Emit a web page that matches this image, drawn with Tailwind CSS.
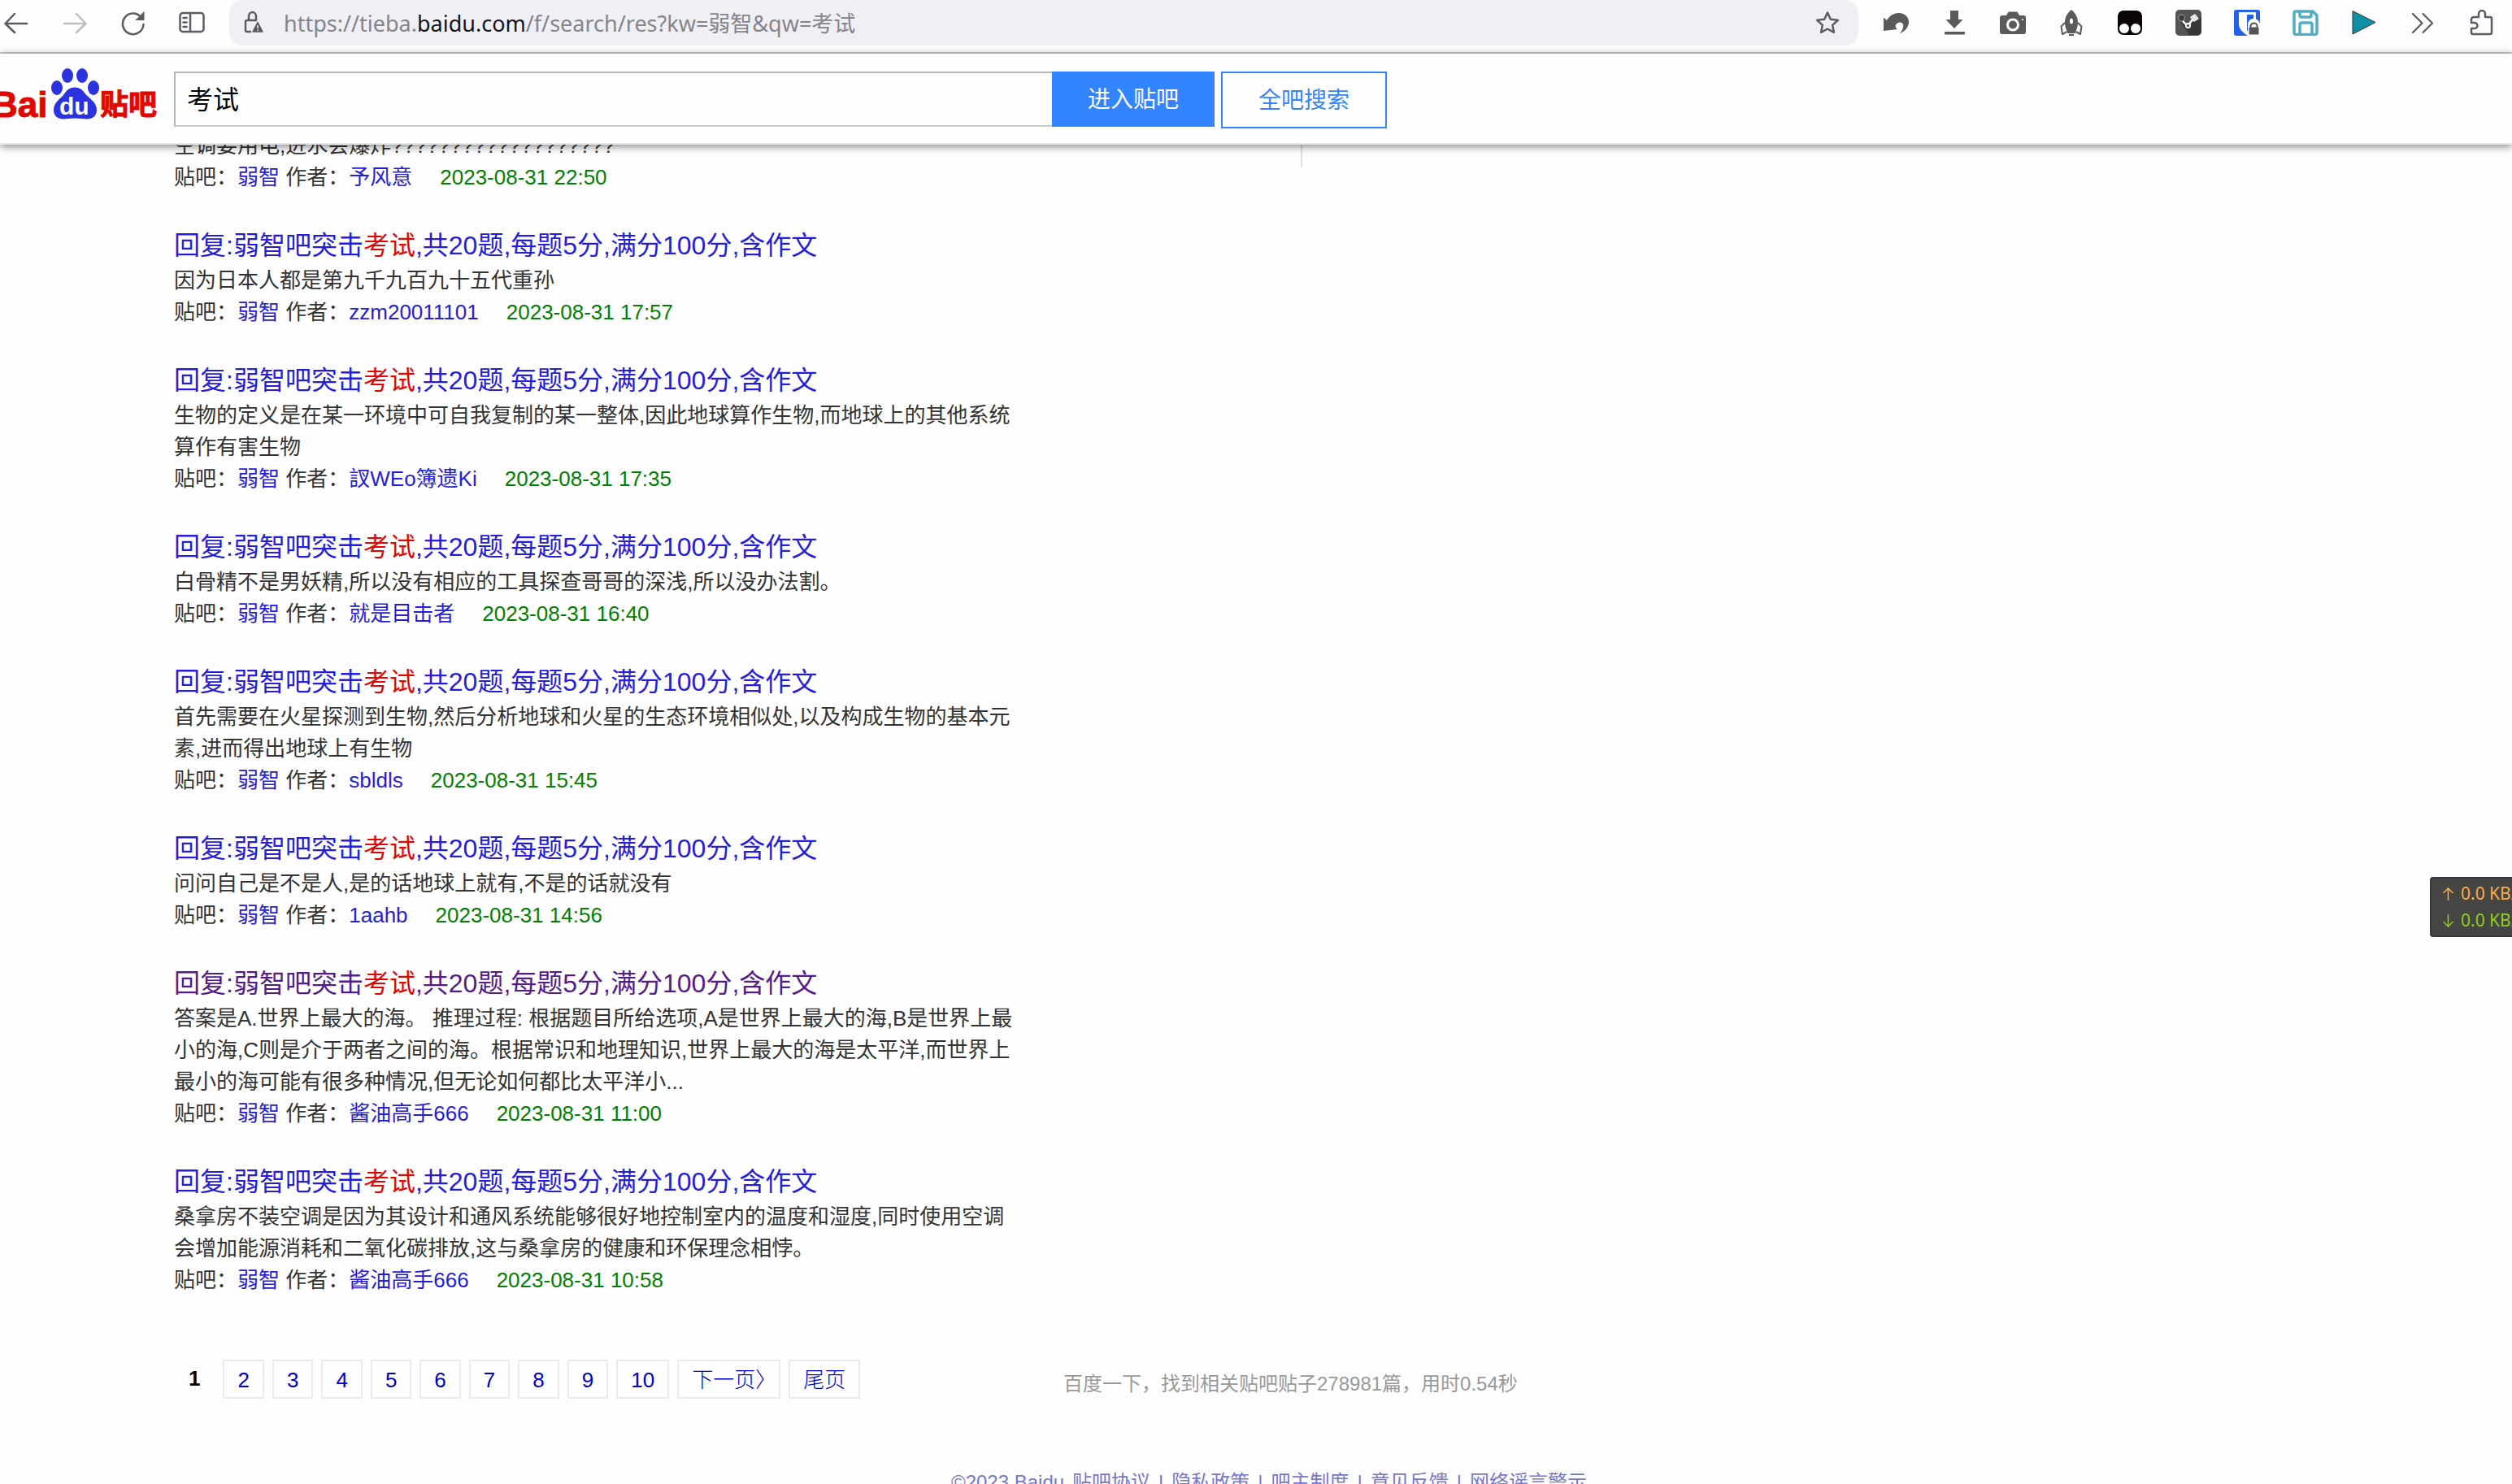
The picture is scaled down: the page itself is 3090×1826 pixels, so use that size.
<!DOCTYPE html>
<html lang="zh-CN">
<head>
    <meta charset="UTF-8">
    <meta name="viewport" content="width=device-width, initial-scale=1.0">
    <title>考试 - 弱智吧 - 百度贴吧</title>
    <script src="https://cdn.jsdelivr.net/npm/@tailwindcss/browser@4"></script>
</head>
<body class="h-screen overflow-hidden flex flex-col bg-[#fefefe] text-[#333] text-[26px] leading-[39px] font-['Liberation_Sans','Noto_Sans_CJK_SC',sans-serif]">

    <!-- browser toolbar -->
    <nav class="shrink-0 h-[66px] pb-2 flex items-center border-b-2 border-[#ccc] pl-1 pr-[22px] text-[#5b5b66]">
        <div class="flex items-center gap-10 mr-[30px]">
            <button aria-label="后退">
                <svg class="size-8" viewBox="0 0 32 32" fill="none" stroke="currentColor" stroke-width="2.5" stroke-linecap="round" stroke-linejoin="round"><path d="M29 17H3M14 5L2.5 17L14 28"/></svg>
            </button>
            <button aria-label="前进" class="text-[#bebec2]" disabled>
                <svg class="size-8" viewBox="0 0 32 32" fill="none" stroke="currentColor" stroke-width="2.5" stroke-linecap="round" stroke-linejoin="round"><path d="M3 17H29M18 5L29.5 17L18 28"/></svg>
            </button>
            <button aria-label="刷新">
                <svg class="size-8" viewBox="0 0 32 32" fill="none" stroke="currentColor" stroke-width="2.5" stroke-linecap="round"><path d="M28.5 18A12.800 12.800 0 1 1 25 8.5"/><path d="M29 3v9.5h-9.5z" fill="currentColor" stroke-width="1" stroke-linejoin="round"/></svg>
            </button>
            <button aria-label="侧栏">
                <svg class="size-8" viewBox="0 0 32 32" fill="none" stroke="currentColor" stroke-width="2.5" stroke-linecap="round"><rect x="1.5" y="4" width="29" height="23" rx="3.5"/><path d="M14 4v23M5.5 10h4M5.5 15.5h4M5.5 21h4"/></svg>
            </button>
        </div>
        <div class="flex-1 h-14 flex items-center rounded-2xl bg-[#f0eff4] pl-[18px] pr-[22px]">
            <svg class="w-6 h-8 shrink-0" viewBox="0 0 24 32" fill="none" stroke="#5b5b66" stroke-width="2.5"><path d="M6 13V8a4.500 5 0 0 1 9 0v5M9 27H4a2 2 0 0 1-2-2V15a2 2 0 0 1 2-2h12"/><path d="M17 15.5l6 11.5H11z" fill="#5b5b66" stroke="#5b5b66" stroke-width="1.5" stroke-linejoin="round"/><path d="M17 19v4M17 24.5v1.500" stroke="#f0eff4" stroke-width="1.5"/></svg>
            <p class="flex-1 ml-[25px] text-[27px] text-[#85858b] font-['Noto_Sans','Noto_Sans_CJK_SC',sans-serif]">https://tieba.<span class="text-[#15141a]">baidu.com</span>/f/search/res?kw=弱智&amp;qw=考试</p>
            <button aria-label="收藏">
                <svg class="size-8" viewBox="0 0 32 32" fill="none" stroke="#5b5b66" stroke-width="2.5" stroke-linejoin="round"><path d="M16 3.500l3.800 8.200 9 1.100-6.600 6.100 1.700 8.900L16 23.500l-7.900 4.300 1.700-8.900-6.600-6.100 9-1.100z"/></svg>
            </button>
        </div>
        <div class="flex items-center gap-10 ml-[30px]">
            <button aria-label="撤销">
                <svg class="size-8" viewBox="0 0 32 32" fill="#5a5a5c"><path d="M1 9.500l4 3.500C9 6 15 4 20 4c7 0 12 5 12 11 0 6-4 11-11 14.500 3-4 5-8 4-11.500-1.500-4-7-3-9 .5-1 2 0 4 2 5.500L1 26z"/></svg>
            </button>
            <button aria-label="下载">
                <svg class="size-8" viewBox="0 0 32 32" fill="#5a5a5c"><path d="M11 1h10v11h5.500L16 23 5.500 12H11z"/><rect x="4" y="27" width="25" height="3.5" rx="1"/></svg>
            </button>
            <button aria-label="截图">
                <svg class="size-8" viewBox="0 0 32 32" fill="#5a5a5c"><path fill-rule="evenodd" d="M3 7h5l2.500-4.500h11L24 7h5a3 3 0 0 1 3 3v17a3 3 0 0 1-3 3H3a3 3 0 0 1-3-3V10a3 3 0 0 1 3-3zm13 3.500a8 8 0 1 0 0 16 8 8 0 0 0 0-16zm0 3a5 5 0 1 1 0 10 5 5 0 0 1 0-10zM28 11a1 1 0 1 0 0 2 1 1 0 0 0 0-2z"/></svg>
            </button>
            <button aria-label="火箭">
                <svg class="size-8" viewBox="0 0 32 32" fill="#5a5a5c"><path fill-rule="evenodd" d="M16 0c5 4 8 9 8 16 0 5-2 9-3.500 13h-9C10 25 8 21 8 16 8 9 11 4 16 0zm0 10.500a2 3.500 0 1 0 0 7 2 3.500 0 0 0 0-7z"/><path d="M8 16l-4.500 4.500 1.500 9.500 5.500-3M24 16l4.500 4.500-1.500 9.500-5.500-3" fill="none" stroke="#5a5a5c" stroke-width="2" stroke-linejoin="round"/><path d="M13 30h6v2h-6z"/></svg>
            </button>
            <button aria-label="脚本">
                <svg class="size-8" viewBox="0 0 32 32"><rect x="1" y="1" width="30" height="30" rx="7" fill="#0c0508"/><circle cx="9" cy="23" r="6" fill="#fff"/><circle cx="23" cy="23" r="6" fill="#fff"/></svg>
            </button>
            <button aria-label="活塞">
                <svg class="size-8" viewBox="0 0 32 32"><rect width="32" height="32" rx="5" fill="#555356"/><path d="M5 13L17 31h10a5 5 0 0 0 5-5V11l-4-3-12 13-6-11z" fill="#373638"/><circle cx="7.5" cy="10" r="4" fill="#3b3b3d" stroke="#7d8688" stroke-width="1.5"/><path d="M9 14l6 6 6-8" fill="none" stroke="#fff" stroke-width="2.5"/><circle cx="15.5" cy="19.5" r="2.5" fill="#444" stroke="#fff" stroke-width="2"/><path d="M18 9l6-4 5 6-6 4z" fill="#fff"/><path d="M20 8l5 6M23 6l4.500 6" stroke="#999" stroke-width=".8"/></svg>
            </button>
            <button aria-label="密码">
                <svg class="size-8" viewBox="0 0 32 32"><rect width="32" height="32" rx="3" fill="#2460e8"/><path d="M6 3h21v14c0 7-5 11-10 15C11 28 6 24 6 17z" fill="#fff"/><path d="M16 6h8v11c0 3-3 6-8 9z" fill="#2460e8"/><path d="M17 32V20a7.500 7.500 0 0 1 15-3v15z" fill="#fefefe"/><rect x="18.5" y="21.5" width="12" height="9" rx="1" fill="#555"/><path d="M20.500 22v-2a4 3.500 0 0 1 8 0v2" fill="none" stroke="#555" stroke-width="2"/></svg>
            </button>
            <button aria-label="保存">
                <svg class="size-8" viewBox="0 0 32 32" fill="none" stroke="#52aec4" stroke-width="3.5" stroke-linejoin="round"><path d="M4 2h21l5 5v21a2.500 2.500 0 0 1-2.500 2.500h-23A2.500 2.500 0 0 1 2 28V4a2 2 0 0 1 2-2z"/><path d="M9 2v5a2 2 0 0 0 2 2h10a2 2 0 0 0 2-2V2M9 30V18a2 2 0 0 1 2-2h11a2 2 0 0 1 2 2v12"/></svg>
            </button>
            <button aria-label="播放">
                <svg class="size-8" viewBox="0 0 32 32"><path d="M2 1.500v28.500l28-14.500z" fill="#0f8fa5" stroke="#333" stroke-width="1"/></svg>
            </button>
            <button aria-label="更多工具">
                <svg class="size-8" viewBox="0 0 32 32" fill="none" stroke="currentColor" stroke-width="2.2" stroke-linecap="round" stroke-linejoin="round"><path d="M4 5l11.500 11.500L4 28M16.500 5L28 16.500 16.500 28"/></svg>
            </button>
            <button aria-label="扩展">
                <svg class="size-8" viewBox="0 0 32 32" fill="none" stroke="currentColor" stroke-width="2.5" stroke-linejoin="round"><path d="M4 16v-4a3 3 0 0 1 3-3h6V5a4 4 0 0 1 8 0v4h6a2 2 0 0 1 2 2v17a2 2 0 0 1-2 2H6a2 2 0 0 1-2-2v-5h4a3.500 3.500 0 0 0 0-7z"/></svg>
            </button>
        </div>
    </nav>

    <!-- search header -->
    <header class="relative z-10 shrink-0 h-28 flex items-start pt-[22px] bg-[#fefefe] border-b-2 border-[#e8e8e8] shadow-[0_2px_10px_rgba(0,0,0,0.5)]">
        <a href="#" class="w-[214px] -mt-2 shrink-0" aria-label="百度贴吧">
            <svg class="w-[200px] h-[68px]" viewBox="0 0 200 68">
                <g fill="#e10602" stroke="#e10602" font-weight="700">
                    <text x="-10" y="64" font-size="44" font-family="Liberation Sans">Bai</text>
                    <text x="123" y="61" font-size="35" font-family="Noto Sans CJK SC">贴吧</text>
                </g>
                <g fill="#2b33e0">
                    <ellipse cx="70" cy="28" rx="7" ry="9"/>
                    <ellipse cx="83" cy="13" rx="7" ry="9"/>
                    <ellipse cx="101" cy="13" rx="7" ry="9"/>
                    <ellipse cx="115" cy="28" rx="7" ry="9"/>
                    <path d="M92 27.500c7 0 10 4 13 8 4 5 14 10 14 20 0 7-5 11-12 11-5 0-9-1-15-1s-10 1-14 1c-7 0-12-4-12-11 0-10 9-14 13-20 3-4 6-8 13-8z"/>
                </g>
                <text x="73" y="61" font-size="30" font-weight="700" fill="#fff" font-family="Liberation Sans">du</text>
            </svg>
        </a>
        <form class="flex items-start">
            <input type="text" value="考试" aria-label="搜索" class="w-[1080px] h-[68px] px-[14px] pb-1 border-2 border-r-0 border-[#ccc] border-t-[#b6b6b6] border-l-[#b6b6b6] text-[32px] text-black outline-none">
            <button type="button" class="w-[200px] h-[68px] bg-[#3385ff] text-white text-[28px]">进入贴吧</button>
            <button type="button" class="ml-2 w-[204px] h-[70px] border-2 border-[#3385ff] text-[#3385ff] text-[28px]">全吧搜索</button>
        </form>
    </header>

    <main class="-mt-[18px] shrink-0 flex">
        <div class="w-[1600px] pl-[214px]">
            <div id="results" class="max-w-[1040px] flex flex-col gap-10"></div>
        </div>
        <aside class="h-[46px] border-l-2 border-[#e0e0e0]"></aside>
    </main>

    <div class="shrink-0 mt-[78px] pl-[214px] flex">
        <nav id="pager" class="w-[1094px] flex gap-[10px]"></nav>
        <p class="pt-[10px] text-2xl leading-[39px] text-[#999]">百度一下，找到相关贴吧贴子278981篇，用时0.54秒</p>
    </div>

    <footer class="shrink-0 mt-[82px] pl-8 flex justify-center gap-[10px] text-2xl leading-[39px] text-[#77c]">
        <span>©2023 Baidu</span>
        <a href="#">贴吧协议</a><span>|</span>
        <a href="#">隐私政策</a><span>|</span>
        <a href="#">吧主制度</a><span>|</span>
        <a href="#">意见反馈</a><span>|</span>
        <a href="#">网络谣言警示</a>
    </footer>

    <!-- network speed widget -->
    <div class="fixed right-0 top-[1079px] w-[101px] h-[74px] pl-[14px] pt-[2px] overflow-hidden whitespace-nowrap rounded-l border-2 border-r-0 border-[#35383c] bg-[#454543] text-[21px] leading-[33px] font-['Noto_Sans',sans-serif]">
        <div class="flex items-center gap-[9px] text-[#fbae48]">
            <svg class="w-[13px] h-4 shrink-0" viewBox="0 0 13 16" fill="none" stroke="currentColor" stroke-width="1.5"><path d="M6.500 16V1M.5 7l6-6 6 6"/></svg>0.0 KB/s
        </div>
        <div class="flex items-center gap-[9px] text-[#8fce1c]">
            <svg class="w-[13px] h-4 shrink-0" viewBox="0 0 13 16" fill="none" stroke="currentColor" stroke-width="1.5"><path d="M6.500 0v15M.5 9l6 6 6-6"/></svg>0.0 KB/s
        </div>
    </div>

    <script>
        const posts = [
            { text: "空调要用电,进水会爆炸???????????????????", author: "予风意", time: "22:50", noTitle: true },
            { text: "因为日本人都是第九千九百九十五代重孙", author: "zzm20011101", time: "17:57" },
            { text: "生物的定义是在某一环境中可自我复制的某一整体,因此地球算作生物,而地球上的其他系统算作有害生物", author: "訍WEo簿遗Ki", time: "17:35" },
            { text: "白骨精不是男妖精,所以没有相应的工具探查哥哥的深浅,所以没办法割。", author: "就是目击者", time: "16:40" },
            { text: "首先需要在火星探测到生物,然后分析地球和火星的生态环境相似处,以及构成生物的基本元素,进而得出地球上有生物", author: "sbldls", time: "15:45" },
            { text: "问问自己是不是人,是的话地球上就有,不是的话就没有", author: "1aahb", time: "14:56" },
            { text: "答案是A.世界上最大的海。 推理过程: 根据题目所给选项,A是世界上最大的海,B是世界上最小的海,C则是介于两者之间的海。根据常识和地理知识,世界上最大的海是太平洋,而世界上最小的海可能有很多种情况,但无论如何都比太平洋小...", author: "酱油高手666", time: "11:00", visited: true },
            { text: "桑拿房不装空调是因为其设计和通风系统能够很好地控制室内的温度和湿度,同时使用空调会增加能源消耗和二氧化碳排放,这与桑拿房的健康和环保理念相悖。", author: "酱油高手666", time: "10:58" }
        ];

        document.getElementById("results").innerHTML = posts.map(post => `
            <article>
                ${post.noTitle ? "" : `<h2 class="text-[32px] leading-[48px]"><a href="#" class="${post.visited ? "text-[#551a8b]" : "text-[#261cdc]"}">回复:弱智吧突击<em class="not-italic text-[#e10602]">考试</em>,共20题,每题5分,满分100分,含作文</a></h2>`}
                <p>${post.text}</p>
                <p>贴吧：<a href="#" class="text-[#261cdc]">弱智</a> 作者：<a href="#" class="text-[#261cdc]">${post.author}</a><time class="ml-[34px] text-[#008000]">2023-08-31 ${post.time}</time></p>
            </article>`).join("");

        const box = "h-12 px-4 border-2 border-[#e7ecee] leading-[46px] text-[#0000cc]";
        let pages = `<span class="h-12 px-[18px] leading-[46px] font-bold text-black">1</span>`;
        for (let i = 2; i <= 10; i++) pages += `<a href="#" class="${box}">${i}</a>`;
        pages += `<a href="#" class="${box} font-light">下一页<span class="[font-feature-settings:'halt']">〉</span></a>`;
        pages += `<a href="#" class="${box} font-light">尾页</a>`;
        document.getElementById("pager").innerHTML = pages;
    </script>
</body>
</html>
